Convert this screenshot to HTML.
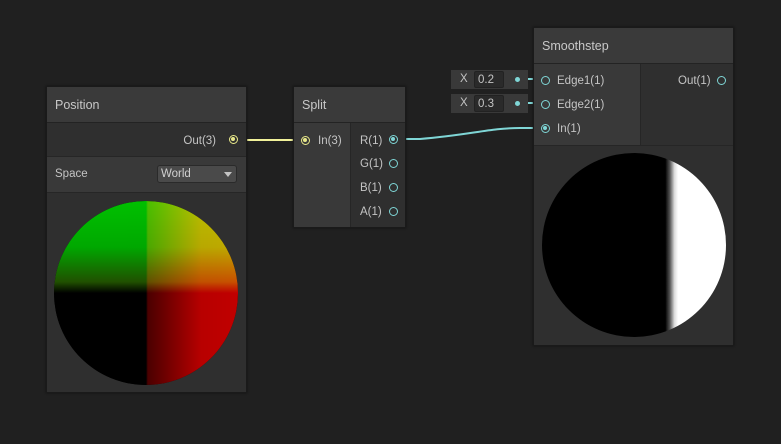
<!DOCTYPE html>
<html><head><style>
body{margin:0;width:781px;height:444px;background:#202020;font-family:"Liberation Sans",sans-serif;font-size:11.5px;color:#c4c4c4;position:relative;overflow:hidden}
.a{position:absolute;box-sizing:border-box}
.node{position:absolute;box-sizing:border-box;background:#2f2f2f;border:1px solid #1a1a1a;box-shadow:0 0 2px #111}
.hd{position:absolute;left:0;right:0;top:0;height:36px;background:#3a3a3a;border-bottom:1px solid #232323;font-size:12.5px;padding:11px 0 0 8px;box-sizing:border-box;color:#c8c8c8}
.port{position:absolute;width:9px;height:9px;border:1.5px solid #7fd6d6;border-radius:50%;box-sizing:border-box}
.y{border-color:#e8e88a}
.dot{position:absolute;width:4px;height:4px;border-radius:50%;left:1px;top:1px;background:#e8e88a}
.c .dot{background:#7fd6d6}
.in{position:absolute;width:77px;height:19px;background:#393939;line-height:19px}
.in span{position:absolute;left:9px;top:0}
.in b{font-weight:normal;position:absolute;left:23px;top:1px;width:30px;height:17px;line-height:16px;background:#2a2a2a;border:1px solid #222;border-radius:2px;padding-left:3px;box-sizing:border-box}
.in i{position:absolute;left:64px;top:7px;width:5px;height:5px;border-radius:50%;background:#7fd6d6}
</style></head><body>
<svg class="a" style="left:0;top:0" width="781" height="444">
<line x1="240" y1="140" x2="300" y2="140" stroke="#f2f29a" stroke-width="2"/>
<path d="M393 139 L420 139 C470 135 490 128 520 128 L543 128" stroke="#7fd6d6" stroke-width="2" fill="none"/>
<line x1="518" y1="79" x2="543" y2="79" stroke="#7fd6d6" stroke-width="2"/>
<line x1="518" y1="103" x2="543" y2="103" stroke="#7fd6d6" stroke-width="2"/>
</svg>
<!-- Position -->
<div class="node" style="left:46px;top:86px;width:201px;height:307px">
 <div class="hd">Position</div>
 <div class="a" style="right:30px;top:48px">Out(3)</div>
 <div class="port y" style="left:182px;top:48px"><div class="dot"></div></div>
 <div class="a" style="left:0;right:0;top:69px;height:37px;background:#393939;border-top:1px solid #262626;border-bottom:1px solid #262626"></div>
 <div class="a" style="left:8px;top:81px">Space</div>
 <div class="a" style="left:110px;top:78px;width:80px;height:18px;background:#4a4a4a;border:1px solid #2a2a2a;border-radius:3px;padding:2px 0 0 3px;color:#d0d0d0">World</div>
 <div class="a" style="left:177px;top:85px;width:0;height:0;border-left:4px solid transparent;border-right:4px solid transparent;border-top:5px solid #c4c4c4"></div>
 <div class="a" style="left:7px;top:114px;width:184px;height:184px;border-radius:50%;overflow:hidden;background:#000">
  <div class="a" style="left:0;top:0;width:184px;height:184px;background:linear-gradient(90deg,#000 50%,#4a0000 51%,#b80000 80%,#c00000)"></div>
  <div class="a" style="left:0;top:0;width:184px;height:184px;mix-blend-mode:screen;background:linear-gradient(180deg,#00c000,#00a800 25%,#205000 44%,#000 50%,#000)"></div>
 </div>
</div>
<!-- Split -->
<div class="node" style="left:293px;top:86px;width:113px;height:142px">
 <div class="hd">Split</div>
 <div class="a" style="left:0;top:36px;width:57px;bottom:0;background:#393939;border-right:1px solid #262626"></div>
 <div class="port y" style="left:7px;top:49px"><div class="dot"></div></div>
 <div class="a" style="left:24px;top:48px">In(3)</div>
 <div class="a" style="left:66px;top:48px">R(1)</div>
 <div class="a" style="left:66px;top:71px">G(1)</div>
 <div class="a" style="left:66px;top:95px">B(1)</div>
 <div class="a" style="left:66px;top:119px">A(1)</div>
 <div class="port c" style="left:95px;top:48px"><div class="dot"></div></div>
 <div class="port" style="left:95px;top:72px"></div>
 <div class="port" style="left:95px;top:96px"></div>
 <div class="port" style="left:95px;top:120px"></div>
</div>
<!-- inline inputs -->
<div class="in" style="left:451px;top:70px"><span>X</span><b>0.2</b><i></i></div>
<div class="in" style="left:451px;top:94px"><span>X</span><b>0.3</b><i></i></div>
<!-- Smoothstep -->
<div class="node" style="left:533px;top:27px;width:201px;height:319px">
 <div class="hd">Smoothstep</div>
 <div class="a" style="left:0;top:36px;width:107px;height:82px;background:#393939;border-right:1px solid #262626"></div>
 <div class="a" style="left:0;right:0;top:117px;height:1px;background:#262626"></div>
 <div class="port" style="left:7px;top:48px"></div>
 <div class="port" style="left:7px;top:72px"></div>
 <div class="port c" style="left:7px;top:96px"><div class="dot"></div></div>
 <div class="a" style="left:23px;top:47px">Edge1(1)</div>
 <div class="a" style="left:23px;top:71px">Edge2(1)</div>
 <div class="a" style="left:23px;top:95px">In(1)</div>
 <div class="a" style="left:144px;top:47px">Out(1)</div>
 <div class="port" style="left:183px;top:48px"></div>
 <div class="a" style="left:8px;top:125px;width:184px;height:184px;border-radius:50%;overflow:hidden;background:linear-gradient(90deg,#000 67%,#555 69.5%,#ddd 72%,#fff 74%)"></div>
</div>
</body></html>
